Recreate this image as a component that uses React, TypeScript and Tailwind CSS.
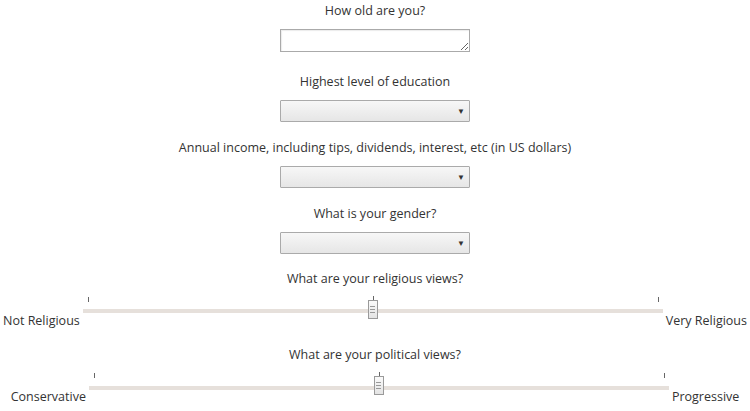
import React from "react";

function Select() {
  return (
    <div className="relative w-[190px] h-[22px] border border-[#aaaaaa] bg-gradient-to-b from-[#f7f7f7] to-[#e6e6e6] rounded-[1px]">
      <span className="absolute right-[4px] top-[5px] text-[8px] leading-[10px] text-[#333]">▼</span>
    </div>
  );
}

function Block({ label, children, h }: { label: string; children: React.ReactNode; h: string }) {
  return (
    <div className={`flex flex-col items-center ${h}`}>
      <div className="h-[18px] leading-[18px]">{label}</div>
      <div className="mt-[9px]">{children}</div>
    </div>
  );
}

function Slider({ left, right, label, textTop, trackTop }: { left: string; right: string; label: string; textTop: string; trackTop: string }) {
  return (
    <div className="flex flex-col items-center">
      <div className="h-[18px] leading-[18px]">{label}</div>
      <div className="flex flex-row justify-center items-start h-[54px] mt-[8px]">
        <div className={`leading-[18px] pr-[3px] ${textTop}`}>{left}</div>
        <div className="relative w-[580px] h-[40px]">
          <div className="absolute left-[5px] top-[1px] w-px h-[5px] bg-[#666]" />
          <div className="absolute left-[290px] top-[0px] w-px h-[5px] bg-[#666]" />
          <div className="absolute left-[575px] top-[1px] w-px h-[5px] bg-[#666]" />
          <div className={`absolute left-0 right-0 h-[4px] bg-[#e6e0db] ${trackTop}`} />
          <div className="absolute left-[285px] top-[4px] w-[10px] h-[19px] border border-[#9a9a9a] bg-gradient-to-b from-[#fafafa] to-[#e4e4e4] flex flex-col items-center justify-center gap-[2px]">
            <div className="w-[5px] h-px bg-[#999]" />
            <div className="w-[5px] h-px bg-[#999]" />
            <div className="w-[5px] h-px bg-[#999]" />
          </div>
        </div>
        <div className={`leading-[18px] pl-[3px] ${textTop}`}>{right}</div>
      </div>
    </div>
  );
}

export default function App() {
  return (
    <div
      className="w-[750px] h-[411px] bg-white text-[#333] text-[12.5px] overflow-hidden pt-[2px]"
      style={{ fontFamily: '"Open Sans", sans-serif' }}
    >
      <Block label="How old are you?" h="h-[71px]">
        <textarea className="block w-[190px] h-[23px] border border-[#aaaaaa] bg-white shadow-[inset_1px_1px_1px_rgba(0,0,0,0.08)]" />
      </Block>
      <Block label="Highest level of education" h="h-[66px]">
        <Select />
      </Block>
      <Block label="Annual income, including tips, dividends, interest, etc (in US dollars)" h="h-[66px]">
        <Select />
      </Block>
      <Block label="What is your gender?" h="h-[66px]">
        <Select />
      </Block>
      <div className="-mt-[1px]">
        <Slider
          label="What are your religious views?"
          left="Not Religious"
          right="Very Religious"
          textTop="mt-[16px]"
          trackTop="top-[13px]"
        />
      </div>
      <div className="-mt-[4px]">
        <Slider
          label="What are your political views?"
          left="Conservative"
          right="Progressive"
          textTop="mt-[16px]"
          trackTop="top-[14px]"
        />
      </div>
    </div>
  );
}
